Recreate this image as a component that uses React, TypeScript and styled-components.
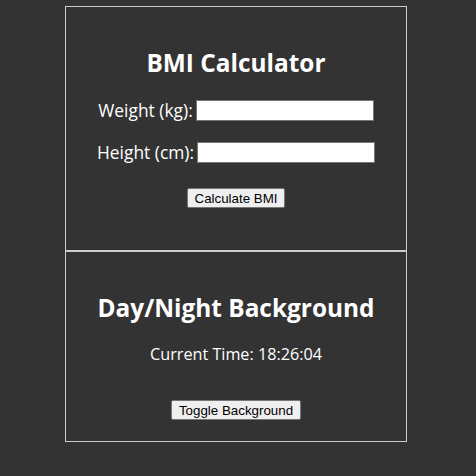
import React, { useState } from 'react';
import styled, { createGlobalStyle } from 'styled-components';

const GlobalStyle = createGlobalStyle`
  body {
    margin: 0;
    background-color: #333333;
    font-family: 'Open Sans', 'Noto Sans', sans-serif;
    color: #ffffff;
  }
`;

const Page = styled.main`
  width: 342px;
  padding: 6px 0 0 65px;
`;

interface SectionProps {
  bottom: number;
}

const Section = styled.section<SectionProps>`
  display: flex;
  flex-direction: column;
  align-items: center;
  border: 1px solid #cccccc;
  padding: 40px 0 ${props => props.bottom}px;
`;

const Title = styled.h2`
  margin: 0;
  font-size: 24.4px;
  line-height: 32px;
  font-weight: 700;
`;

const Field = styled.div`
  display: flex;
  align-items: center;
  gap: 3px;
  margin-top: 20px;
  height: 22px;
  font-size: 17.4px;
`;

const Input = styled.input`
  box-sizing: border-box;
  width: 178px;
  height: 21px;
  border: 1px solid #767676;
  background: #ffffff;
  padding: 1px 2px;
`;

const Button = styled.button`
  height: 20px;
  padding: 1px 7px;
  font-family: 'Liberation Sans', Arial, sans-serif;
  font-size: 13.33px;
  color: #000000;
  background: #efefef;
  border: 1px solid #767676;
  border-radius: 2px;
`;

const CalcButton = styled(Button)`
  margin-top: 25px;
`;

const ToggleButton = styled(Button)`
  margin-top: 35px;
`;

const Clock = styled.p`
  margin: 19px 0 0;
  font-size: 16.2px;
  line-height: 22px;
`;

const App: React.FC = () => {
  const [weight, setWeight] = useState('');
  const [height, setHeight] = useState('');

  return (
    <>
      <GlobalStyle />
      <Page>
        <Section bottom={42}>
          <Title>BMI Calculator</Title>
          <Field>
            <label>Weight (kg):</label>
            <Input value={weight} onChange={e => setWeight(e.target.value)} />
          </Field>
          <Field>
            <label>Height (cm):</label>
            <Input value={height} onChange={e => setHeight(e.target.value)} />
          </Field>
          <CalcButton>Calculate BMI</CalcButton>
        </Section>
        <Section bottom={21}>
          <Title>Day/Night Background</Title>
          <Clock>Current Time: 18:26:04</Clock>
          <ToggleButton>Toggle Background</ToggleButton>
        </Section>
      </Page>
    </>
  );
};

export default App;
